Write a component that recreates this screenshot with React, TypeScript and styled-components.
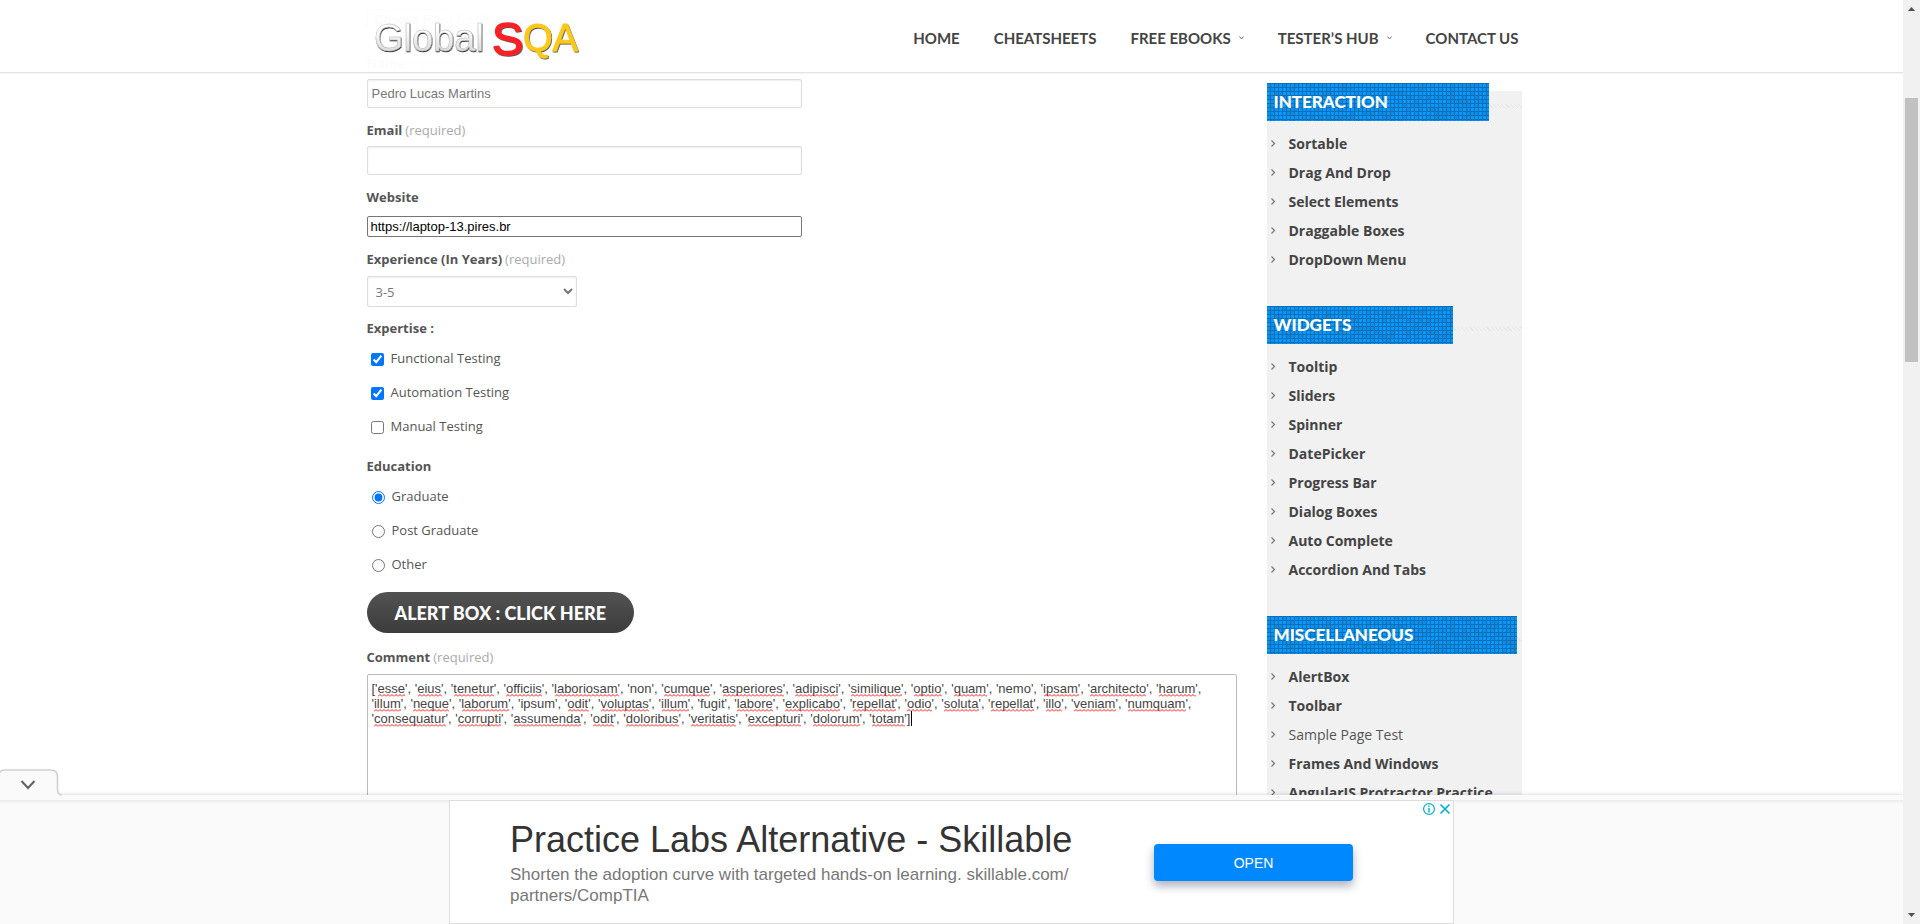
import React, { useLayoutEffect, useRef, useState } from 'react';
import styled, { createGlobalStyle, css } from 'styled-components';

const sans = '"Open Sans", "Noto Sans", sans-serif';
const arial = '"Liberation Sans", Arial, sans-serif';
const display = 'Lato, "Open Sans", sans-serif';

const GlobalStyle = createGlobalStyle`
  *, *::before, *::after { box-sizing: border-box; }
  body { margin: 0; background: #fff; color: #555; font: 13px/20px ${sans}; }
  a { color: inherit; text-decoration: none; }
  h3, ul, p { margin: 0; padding: 0; }
  ul { list-style: none; }
`;

const Shell = styled.div`
  display: flex;
  height: 100vh;
  overflow: hidden;
`;

const Viewport = styled.div`
  position: relative;
  flex: 1;
  min-width: 0;
  display: flex;
  flex-direction: column;
`;

const Scroller = styled.div`
  flex: 1;
  min-height: 0;
  overflow: hidden;
`;

const Container = styled.div`
  width: 100%;
  max-width: 1170px;
  margin: 0 auto;
  padding-right: 15px;
`;

/* Header */

const Header = styled.header`
  position: absolute;
  inset: 0 0 auto;
  z-index: 2;
  height: 74px;
  background: rgba(255, 255, 255, 0.98);
  border-bottom: 1px solid #f5f5f5;
  box-shadow: inset 0 -1px 0 #e3e3e3;
`;

const HeaderRow = styled(Container)`
  display: flex;
  align-items: center;
  justify-content: space-between;
  height: 100%;
`;

const Nav = styled.nav`
  display: flex;
  gap: 34px;
  padding: 2px 3px 0 0;
`;

const NavLink = styled.a`
  display: flex;
  align-items: center;
  gap: 8px;
  font: 700 15px/20px ${display};
  color: #444;
`;

const LogoLink = styled.a`
  display: block;
  height: 62px;
`;

const Caret = () => (
  <svg width="5" height="4" viewBox="0 0 5 4" aria-hidden="true">
    <path d="M0.5 0.5L2.5 3L4.5 0.5" fill="none" stroke="#777" />
  </svg>
);

const Logo = () => (
  <svg width="216" height="62" viewBox="0 0 216 62" role="img" aria-label="GlobalSQA">
    <defs>
      <linearGradient id="silver" x1="0" y1="0" x2="0" y2="1">
        <stop offset="0.3" stopColor="#ffffff" />
        <stop offset="0.8" stopColor="#dcdcdc" />
      </linearGradient>
      <filter id="edge" x="-10%" y="-10%" width="120%" height="120%">
        <feDropShadow dx="0.5" dy="1" stdDeviation="0.6" floodColor="#222" floodOpacity="1" />
      </filter>
      <filter id="lift" x="-10%" y="-10%" width="120%" height="120%">
        <feDropShadow dx="0.8" dy="1" stdDeviation="0.6" floodColor="#222" floodOpacity="0.8" />
      </filter>
    </defs>
    <text x="7" y="45" fontFamily={arial} fontSize="38" fill="url(#silver)" stroke="#b4b4b4" strokeWidth="0.4" filter="url(#edge)">Global</text>
    <g strokeLinejoin="round" filter="url(#lift)" fontFamily={arial}>
      <text x="125" y="49" fontSize="47" fill="#fb2026" stroke="#fb2026" strokeWidth="1.600">S</text>
      <text x="156" y="45" fontSize="38" fill="#fcc917" stroke="#fcc917" strokeWidth="0.8">QA</text>
    </g>
  </svg>
);

/* Form */

const Columns = styled(Container)`
  display: grid;
  grid-template-columns: minmax(0, 1fr) 255px;
  gap: 30px;
  align-items: start;
`;

const Form = styled.form`
  padding-top: 9px;
`;

const FileInput = styled.input`
  display: block;
  height: 21px;
  font: 13px ${arial};
`;

const Field = styled.div`
  margin-top: 12px;
`;

const NameField = styled(Field)`
  margin-top: 23px;
`;

const labelText = css`
  display: block;
  font-weight: 700;
  color: #555;
`;

const Label = styled.label`
  ${labelText}
  margin-bottom: 6px;
`;

const Required = styled.span`
  margin-left: 3px;
  font-weight: 400;
  color: #aaa;
`;

const TextInput = styled.input`
  display: block;
  width: 50%;
  height: 29px;
  padding: 0 4px;
  border: 1px solid #ddd;
  border-radius: 2px;
  box-shadow: inset 0 1px 2px rgba(0, 0, 0, 0.07);
  font: 13px ${arial};
  color: #777;
`;

const PlainInput = styled.input`
  display: block;
  width: 50%;
  height: 21px;
  margin-top: 9px;
  padding: 0 3px;
  border: 1px solid #767676;
  border-radius: 2px;
  font: 13px ${arial};
  color: #000;
`;

const Select = styled.select`
  display: block;
  width: 210px;
  height: 31px;
  margin-top: 7px;
  padding: 0 4px;
  border: 1px solid #ddd;
  border-radius: 2px;
  background-color: #fff;
  box-shadow: inset 0 1px 2px rgba(0, 0, 0, 0.07);
  font: 13px ${sans};
  color: #777;
`;

const Fieldset = styled.fieldset`
  margin: 11px 0 0;
  padding: 0;
  border: 0;
`;

const Legend = styled.legend`
  ${labelText}
  margin-bottom: 5px;
  padding: 0;
`;

const Choice = styled.label<{ $round?: boolean }>`
  display: flex;
  align-items: flex-start;
  gap: 7px;
  width: max-content;
  height: 34px;
  padding: 5px 0 0 ${(p) => (p.$round ? 5 : 4)}px;
  input { margin: 5px 0 0; width: 13px; height: 13px; accent-color: #0075ff; }
`;

const AlertButton = styled.button`
  display: block;
  height: 41px;
  margin: 9px 0 14px;
  padding: 0 28px;
  border: 0;
  border-radius: 21px;
  background: linear-gradient(#525252, #3c3c3c);
  color: #fff;
  font: 900 18px/20px ${display};
`;

const CommentBox = styled.div`
  position: relative;
  margin-top: 7px;
`;

const TextArea = styled.textarea`
  display: block;
  width: 100%;
  height: 300px;
  padding: 6px 4px;
  border: 1px solid #bbb;
  border-radius: 2px;
  background: #fff;
  color: #444;
  font: 13px/15px ${arial};
  resize: none;
`;

const SpellMarks = styled.svg`
  position: absolute;
  inset: 0;
  width: 100%;
  height: 100%;
  pointer-events: none;
`;

/* Sidebar */

const Sidebar = styled.aside`
  height: 1100px;
  margin-top: 91px;
  background: #f1f1f1;
`;

const Section = styled.section`
  position: relative;
  margin-bottom: 32px;
  &:first-child { margin-top: -8px; }
`;

const BannerRow = styled.div`
  display: flex;
  align-items: center;
  margin-bottom: 8px;
`;

const Banner = styled.h3<{ $width: number }>`
  position: relative;
  width: ${(p) => p.$width}px;
  height: 38px;
  padding-left: 7px;
  background: #0898ff;
  color: #fff;
  font: 900 17px/38px ${display};
  span { position: relative; }
`;

const Mosaic = styled.svg`
  position: absolute;
  inset: 0;
`;

const Hatch = styled.div`
  flex: 1;
  height: 4px;
  margin-top: 8px;
  background: repeating-linear-gradient(45deg, #f1f1f1 0 2px, #e6e6e6 2px 3px);
`;

const Item = styled.li`
  display: flex;
  align-items: center;
  height: 29px;
  padding-left: 4px;
`;

const ItemLink = styled.a<{ $current?: boolean }>`
  margin-left: 13px;
  font-size: 14px;
  font-weight: ${(p) => (p.$current ? 400 : 700)};
  color: ${(p) => (p.$current ? '#555' : '#444')};
  white-space: nowrap;
`;

const Chevron = () => (
  <svg width="5" height="7" viewBox="0 0 5 7" aria-hidden="true">
    <path d="M0.5 0.5L3.5 3.5L0.5 6.5" fill="none" stroke="#777" strokeWidth="1.2" />
  </svg>
);

/* Ad dock */

const Dock = styled.div`
  position: relative;
  display: flex;
  justify-content: center;
  height: 129px;
  padding-top: 5px;
  background: #fafafa;
  box-shadow: 0 0 4px rgba(0, 0, 0, 0.2);
  &::before {
    content: '';
    position: absolute;
    inset: 5px 0 auto;
    height: 4px;
    background: linear-gradient(#ebebeb, #fafafa);
  }
`;

const DockTab = styled.button`
  position: absolute;
  left: 0;
  top: -26px;
  width: 62px;
  height: 27px;
  padding: 0;
  border: 0;
  background: none;
  svg { display: block; }
`;

const Ad = styled.div`
  position: relative;
  display: flex;
  width: 1005px;
  height: 124px;
  padding-left: 60px;
  border: 1px solid #ddd;
  background: #fff;
`;

const AdCopy = styled.div`
  width: 644px;
  padding-top: 19px;
  font: 17px/21px ${arial};
  color: #777;
`;

const AdTitle = styled.h3`
  margin-bottom: 4px;
  font: 400 36px/40px ${arial};
  color: #333;
`;

const AdButton = styled.button`
  width: 199px;
  height: 37px;
  margin-top: 43px;
  border: 0;
  border-radius: 4px;
  background: #08f;
  box-shadow: 0 5px 10px rgba(20, 30, 60, 0.35);
  color: #fff;
  font: 14px ${arial};
`;

const AdMarks = styled.svg`
  position: absolute;
  top: 1px;
  right: 0;
`;

/* Page scrollbar */

const Scrollbar = styled.div`
  position: relative;
  z-index: 3;
  display: flex;
  flex-direction: column;
  align-items: center;
  width: 17px;
  background: #f1f1f1;
`;

const Arrow = styled.svg`
  display: block;
  flex: none;
`;

const Track = styled.div<{ $share: number }>`
  flex: ${(p) => p.$share} 0 0;
`;

const Thumb = styled(Track)`
  width: 13px;
  background: #c1c1c1;
`;

const navItems = [
  { text: 'HOME' },
  { text: 'CHEATSHEETS' },
  { text: 'FREE EBOOKS', menu: true },
  { text: 'TESTER’S HUB', menu: true },
  { text: 'CONTACT US' },
];

const sections = [
  {
    title: 'INTERACTION',
    width: 222,
    items: ['Sortable', 'Drag And Drop', 'Select Elements', 'Draggable Boxes', 'DropDown Menu'],
  },
  {
    title: 'WIDGETS',
    width: 186,
    items: ['Tooltip', 'Sliders', 'Spinner', 'DatePicker', 'Progress Bar', 'Dialog Boxes', 'Auto Complete', 'Accordion And Tabs'],
  },
  {
    title: 'MISCELLANEOUS',
    width: 250,
    items: ['AlertBox', 'Toolbar', 'Sample Page Test', 'Frames And Windows', 'AngularJS Protractor Practice'],
  },
];

const currentPage = 'Sample Page Test';

const words = (
  'esse eius tenetur officiis laboriosam non cumque asperiores adipisci similique optio quam nemo ipsam architecto harum ' +
  'illum neque laborum ipsum odit voluptas illum fugit labore explicabo repellat odio soluta repellat illo veniam numquam ' +
  'consequatur corrupti assumenda odit doloribus veritatis excepturi dolorum totam'
).split(' ');
const knownWords = ['non', 'nemo', 'ipsum', 'fugit'];
const comment = `['${words.join("', '")}']`;

type Mark = { x: number; y: number; width: number };

/* Wraps the comment the way the text area does and returns one mark per unknown word. */
function measureMarks(available: number) {
  const pen = document.createElement('canvas').getContext('2d')!;
  pen.font = `13px ${arial}`;
  const widthOf = (text: string) => pen.measureText(text).width;
  const marks: Mark[] = [];
  let line = '';
  let row = 0;
  comment.split(' ').forEach((token) => {
    if (line && widthOf(line + token) > available) {
      line = '';
      row += 1;
    }
    const word = token.replace(/[^a-z]/g, '');
    if (!knownWords.includes(word)) {
      const lead = line + token.slice(0, token.indexOf(word));
      marks.push({ x: widthOf(lead), y: row * 15 + 13, width: widthOf(word) });
    }
    line += `${token} `;
  });
  return { marks, caret: { x: widthOf(line.trimEnd()), y: row * 15, width: 1 } };
}

const Comment = () => {
  const area = useRef<HTMLTextAreaElement>(null);
  const [spelling, setSpelling] = useState<ReturnType<typeof measureMarks> | null>(null);

  useLayoutEffect(() => {
    const update = () => area.current && setSpelling(measureMarks(area.current.clientWidth - 8));
    update();
    window.addEventListener('resize', update);
    return () => window.removeEventListener('resize', update);
  }, []);

  return (
    <CommentBox>
      <TextArea id="comment" ref={area} defaultValue={comment} spellCheck={false} />
      {spelling && (
        <SpellMarks aria-hidden="true">
          <defs>
            <pattern id="squiggle" width="4" height="3" patternUnits="userSpaceOnUse">
              <path d="M0 2.500L2 0.500L4 2.500" fill="none" stroke="#f00" strokeWidth="0.9" />
            </pattern>
          </defs>
          <g transform="translate(5 7)">
            {spelling.marks.map((mark, i) => (
              <g key={i} transform={`translate(${Math.round(mark.x)} ${mark.y})`}>
                <rect width={Math.round(mark.width)} height="3" fill="url(#squiggle)" />
              </g>
            ))}
            <rect x={Math.round(spelling.caret.x)} y={spelling.caret.y} width="1" height="15" fill="#000" />
          </g>
        </SpellMarks>
      )}
    </CommentBox>
  );
};

const BannerPattern = ({ id, width }: { id: string; width: number }) => {
  const cells: React.ReactNode[] = [];
  const columns = Math.ceil(width / 4);
  for (let row = 0; row < 10; row++) {
    for (let col = 0; col < columns; col++) {
      const noise = Math.abs(Math.sin(col * 12.9898 + row * 78.233) * 43758.5453) % 1;
      if (noise < 0.4) {
        cells.push(
          <rect key={`${row}-${col}`} x={col * 4} y={row * 4} width="4" height="4" fill="#1c80c8" opacity={0.3 + noise} />,
        );
      }
    }
  }
  return (
    <Mosaic width={width} height="38" aria-hidden="true">
      <defs>
        <pattern id={id} width="4" height="4" patternUnits="userSpaceOnUse">
          <path d="M0 0.5H4M3.5 0V4" stroke="#0b70b8" strokeWidth="1" />
        </pattern>
      </defs>
      {cells}
      <rect width={width} height="38" fill={`url(#${id})`} />
    </Mosaic>
  );
};

export default function App() {
  return (
    <Shell>
      <GlobalStyle />
      <Viewport>
        <Header>
          <HeaderRow>
            <LogoLink href="#home"><Logo /></LogoLink>
            <Nav>
              {navItems.map((item) => (
                <NavLink key={item.text} href="#nav">
                  {item.text}
                  {item.menu && <Caret />}
                </NavLink>
              ))}
            </Nav>
          </HeaderRow>
        </Header>

        <Scroller>
          <Columns>
            <Form>
              <FileInput type="file" aria-label="Profile picture" />
              <NameField>
                <Label htmlFor="name">Name<Required>(required)</Required></Label>
                <TextInput id="name" defaultValue="Pedro Lucas Martins" />
              </NameField>
              <Field>
                <Label htmlFor="email">Email<Required>(required)</Required></Label>
                <TextInput id="email" type="email" />
              </Field>
              <Field>
                <Label htmlFor="website">Website</Label>
                <PlainInput id="website" type="url" defaultValue="https://laptop-13.pires.br" />
              </Field>
              <Field>
                <Label htmlFor="experience">Experience (In Years)<Required>(required)</Required></Label>
                <Select id="experience" defaultValue="3-5">
                  <option>0-1</option>
                  <option>1-3</option>
                  <option>3-5</option>
                  <option>5-7</option>
                </Select>
              </Field>
              <Fieldset>
                <Legend>Expertise :</Legend>
                <Choice><input type="checkbox" defaultChecked />Functional Testing</Choice>
                <Choice><input type="checkbox" defaultChecked />Automation Testing</Choice>
                <Choice><input type="checkbox" />Manual Testing</Choice>
              </Fieldset>
              <Fieldset>
                <Legend>Education</Legend>
                <Choice $round><input type="radio" name="education" defaultChecked />Graduate</Choice>
                <Choice $round><input type="radio" name="education" />Post Graduate</Choice>
                <Choice $round><input type="radio" name="education" />Other</Choice>
              </Fieldset>
              <AlertButton type="button">ALERT BOX : CLICK HERE</AlertButton>
              <Label htmlFor="comment">Comment<Required>(required)</Required></Label>
              <Comment />
            </Form>

            <Sidebar>
              {sections.map((section) => (
                <Section key={section.title}>
                  <BannerRow>
                    <Banner $width={section.width}>
                      <BannerPattern id={`grid-${section.title}`} width={section.width} />
                      <span>{section.title}</span>
                    </Banner>
                    <Hatch />
                  </BannerRow>
                  <ul>
                    {section.items.map((item) => (
                      <Item key={item}>
                        <Chevron />
                        <ItemLink href="#demo" $current={item === currentPage}>{item}</ItemLink>
                      </Item>
                    ))}
                  </ul>
                </Section>
              ))}
            </Sidebar>
          </Columns>
        </Scroller>

        <Dock>
          <DockTab type="button" aria-label="Hide advertisement">
            <svg width="62" height="27" viewBox="0 0 62 27" aria-hidden="true">
              <path d="M0 1.5H51Q57.5 1.5 57.5 8V20Q57.5 26 62 26.5V27H0Z" fill="#fafafa" />
              <path d="M0 3.5Q1 1 4 1H51Q57.5 1 57.5 8V20Q57.5 26 62 26" fill="none" stroke="#d0d0d0" strokeWidth="1.6" />
              <path d="M21.5 12L28 19L34.5 12" fill="none" stroke="#606060" strokeWidth="2" />
            </svg>
          </DockTab>
          <Ad>
            <AdCopy>
              <AdTitle>Practice Labs Alternative - Skillable</AdTitle>
              <p>Shorten the adoption curve with targeted hands-on learning. skillable.com/<br />partners/CompTIA</p>
            </AdCopy>
            <AdButton type="button">OPEN</AdButton>
            <AdMarks width="30" height="14" viewBox="0 0 30 14" role="img" aria-label="Ad choices">
              <g fill="none" stroke="#00aecd" strokeWidth="1.2">
                <circle cx="6" cy="7" r="5.4" />
                <path d="M6 6V10.5M6 3.5V5" strokeWidth="1.4" />
                <path d="M17.500 2.500L26.500 11.500M26.500 2.500L17.500 11.500" strokeWidth="1.6" />
              </g>
            </AdMarks>
          </Ad>
        </Dock>
      </Viewport>

      <Scrollbar aria-hidden="true">
        <Arrow width="17" height="17" viewBox="0 0 17 17"><path d="M5 11H12L8.500 7Z" fill="#505050" /></Arrow>
        <Track $share={81} />
        <Thumb $share={264} />
        <Track $share={545} />
        <Arrow width="17" height="17" viewBox="0 0 17 17"><path d="M5 6H12L8.500 10Z" fill="#505050" /></Arrow>
      </Scrollbar>
    </Shell>
  );
}
